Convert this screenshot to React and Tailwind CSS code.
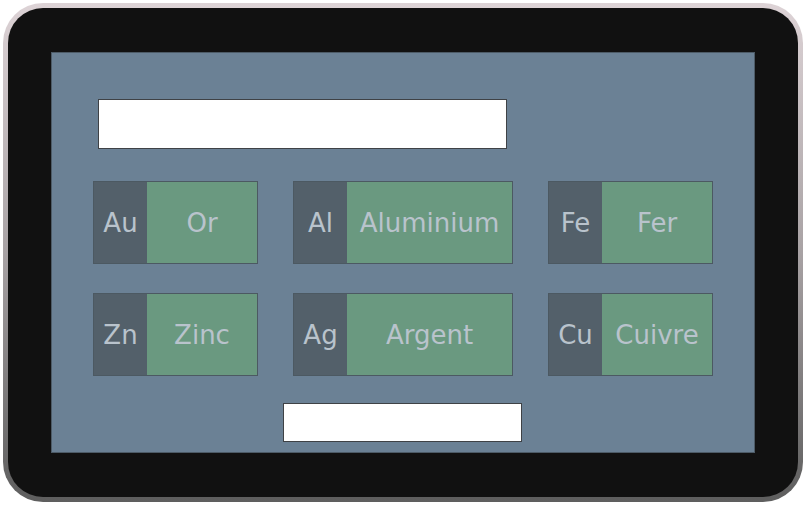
const rows = [
  [
    { sym: "Au", name: "Or", w: "w-[165px]" },
    { sym: "Al", name: "Aluminium", w: "w-[220px]" },
    { sym: "Fe", name: "Fer", w: "w-[165px]" },
  ],
  [
    { sym: "Zn", name: "Zinc", w: "w-[165px]" },
    { sym: "Ag", name: "Argent", w: "w-[220px]" },
    { sym: "Cu", name: "Cuivre", w: "w-[165px]" },
  ],
];

function Card({ sym, name, w }) {
  return (
    <div className={`flex h-[83px] ${w} border border-[#4c5962] text-[26px] text-[#b9c3cc]`}>
      <div className="flex w-[53px] shrink-0 items-center justify-center bg-[#53606a] pt-[2px]">{sym}</div>
      <div className="flex flex-1 items-center justify-center bg-[#6a9980] pt-[2px]">{name}</div>
    </div>
  );
}

export default function App() {
  return (
    <div className="h-[505px] w-[807px] bg-white pl-[3px] pt-[3px] font-['DejaVu_Sans',Verdana,sans-serif]">
      <div className="h-[499px] w-[800px] rounded-[40px] bg-gradient-to-b from-[#ddd3d6] via-[#a8a2a4] to-[#5e5e5e] p-[5px]">
        <div className="h-full w-full rounded-[35px] bg-[#111111] pl-[43px] pt-[44px]">
          <div className="flex h-[401px] w-[704px] flex-col border border-[#4d5b67] bg-[#6b8195]">
            <div className="ml-[46px] mt-[46px] h-[50px] w-[409px] border border-[#3f4246] bg-white" />

            <div className="ml-[41px] mt-[32px] flex flex-col gap-[29px]">
              {rows.map((row, i) => (
                <div key={i} className="flex gap-[35px]">
                  {row.map((c) => (
                    <Card key={c.sym} {...c} />
                  ))}
                </div>
              ))}
            </div>

            <div className="ml-[231px] mt-[27px] h-[39px] w-[239px] border border-[#3f4246] bg-white" />
          </div>
        </div>
      </div>
    </div>
  );
}
